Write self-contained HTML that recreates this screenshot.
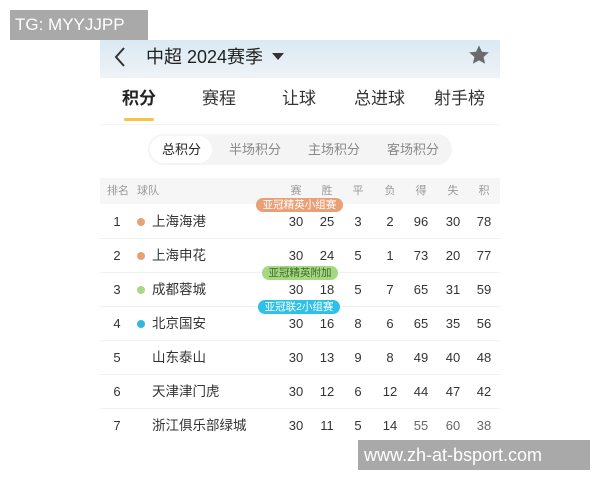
<!DOCTYPE html>
<html><head><meta charset="utf-8"><style>
*{margin:0;padding:0;box-sizing:border-box}
body{width:600px;height:480px;background:#fff;position:relative;overflow:hidden;font-family:"Liberation Sans","Noto Sans CJK SC",sans-serif;color:#222;line-height:1.2}
.a{position:absolute}
.wm{background:#a9a9a9;color:#fff;font-size:17px;line-height:30px}
.hdr{left:100px;top:40px;width:400px;height:38px;background:linear-gradient(#dbe9f2,#eef3f7)}
.tab{top:88px;font-size:17px;line-height:22px;color:#333}
.row{left:100px;width:400px;height:34px;border-bottom:1px solid #f0f0f0;font-size:13px;color:#333}
.row span{position:absolute;top:9px;line-height:16px;transform:translateX(-50%)}
.row .nm{transform:none;left:52px;font-size:13.5px;top:8px;line-height:18px}
.dot{position:absolute;left:37px;top:13px;width:8px;height:8px;border-radius:50%}
.th span{position:absolute;top:6px;line-height:14px;transform:translateX(-50%);font-size:11px;color:#999}
.bd{height:14px;border-radius:7px;color:#fff;font-size:10.5px;line-height:14px;text-align:center}
.st{top:142px;font-size:13px;line-height:16px;color:#888}
</style></head><body>
<div class="a wm" style="left:10px;top:10px;width:138px;padding-left:5px">TG: MYYJJPP</div>
<div class="a hdr"></div>
<svg class="a" style="left:112px;top:46px" width="16" height="22"><path d="M12 2 L4 11 L12 20" fill="none" stroke="#333" stroke-width="2"/></svg>
<div class="a" style="left:146px;top:46px;font-size:18px;line-height:22px;color:#222">中超 2024赛季</div>
<svg class="a" style="left:272px;top:53px" width="12" height="8"><path d="M0 0 L12 0 L6 7Z" fill="#333"/></svg>
<svg class="a" style="left:468px;top:44px" width="22" height="22" viewBox="0 0 24 24"><path d="M12 1.5l3.2 7 7.5.7-5.7 5 1.7 7.4L12 17.8 5.3 21.6 7 14.2 1.3 9.2l7.5-.7z" fill="#6b6b6e"/></svg>
<div class="a tab" style="left:122px;font-weight:bold;color:#222">积分</div>
<div class="a" style="left:124px;top:118px;width:30px;height:3px;background:#f5c542;border-radius:2px"></div>
<div class="a tab" style="left:202px">赛程</div>
<div class="a tab" style="left:282px">让球</div>
<div class="a tab" style="left:354px">总进球</div>
<div class="a tab" style="left:434px">射手榜</div>
<div class="a" style="left:100px;top:124px;width:400px;height:1px;background:#f2f2f2"></div>
<div class="a" style="left:148px;top:134px;width:304px;height:31px;background:#f4f4f4;border-radius:16px"></div>
<div class="a" style="left:150px;top:136px;width:62px;height:27px;background:#fff;border-radius:14px"></div>
<div class="a st" style="left:162px;color:#222">总积分</div>
<div class="a st" style="left:229px">半场积分</div>
<div class="a st" style="left:308px">主场积分</div>
<div class="a st" style="left:387px">客场积分</div>
<div class="a th" style="left:100px;top:178px;width:400px;height:26px;background:#f6f6f6">
<span style="left:7px;transform:none">排名</span><span style="left:37px;transform:none">球队</span>
<span style="left:196px">赛</span><span style="left:227px">胜</span><span style="left:258px">平</span><span style="left:290px">负</span><span style="left:321px">得</span><span style="left:353px">失</span><span style="left:384px">积</span></div>
<div class="a row" style="top:205px"><span style="left:17px">1</span><i class="dot" style="background:#e8a27a"></i><span class="nm">上海海港</span><span style="left:196px">30</span><span style="left:227px">25</span><span style="left:258px">3</span><span style="left:290px">2</span><span style="left:321px">96</span><span style="left:353px">30</span><span style="left:384px">78</span></div>
<div class="a row" style="top:239px"><span style="left:17px">2</span><i class="dot" style="background:#e8a27a"></i><span class="nm">上海申花</span><span style="left:196px">30</span><span style="left:227px">24</span><span style="left:258px">5</span><span style="left:290px">1</span><span style="left:321px">73</span><span style="left:353px">20</span><span style="left:384px">77</span></div>
<div class="a row" style="top:273px"><span style="left:17px">3</span><i class="dot" style="background:#a8d88a"></i><span class="nm">成都蓉城</span><span style="left:196px">30</span><span style="left:227px">18</span><span style="left:258px">5</span><span style="left:290px">7</span><span style="left:321px">65</span><span style="left:353px">31</span><span style="left:384px">59</span></div>
<div class="a row" style="top:307px"><span style="left:17px">4</span><i class="dot" style="background:#2fb9e0"></i><span class="nm">北京国安</span><span style="left:196px">30</span><span style="left:227px">16</span><span style="left:258px">8</span><span style="left:290px">6</span><span style="left:321px">65</span><span style="left:353px">35</span><span style="left:384px">56</span></div>
<div class="a row" style="top:341px"><span style="left:17px">5</span><span class="nm">山东泰山</span><span style="left:196px">30</span><span style="left:227px">13</span><span style="left:258px">9</span><span style="left:290px">8</span><span style="left:321px">49</span><span style="left:353px">40</span><span style="left:384px">48</span></div>
<div class="a row" style="top:375px"><span style="left:17px">6</span><span class="nm">天津津门虎</span><span style="left:196px">30</span><span style="left:227px">12</span><span style="left:258px">6</span><span style="left:290px">12</span><span style="left:321px">44</span><span style="left:353px">47</span><span style="left:384px">42</span></div>
<div class="a row" style="top:409px;border:none"><span style="left:17px">7</span><span class="nm">浙江俱乐部绿城</span><span style="left:196px">30</span><span style="left:227px">11</span><span style="left:258px">5</span><span style="left:290px">14</span><span style="left:321px;color:#666">55</span><span style="left:353px;color:#666">60</span><span style="left:384px;color:#666">38</span></div>
<div class="a bd" style="left:256px;top:198px;width:87px;background:#e9a076">亚冠精英小组赛</div>
<div class="a bd" style="left:262px;top:266px;width:76px;background:#a5d882;color:#3f6a2a">亚冠精英附加</div>
<div class="a bd" style="left:258px;top:300px;width:82px;background:#2ec0e6">亚冠联2小组赛</div>
<div class="a wm" style="left:358px;top:440px;width:232px;height:30px;font-size:18px;padding-left:6px">www.zh-at-bsport.com</div>
</body></html>
